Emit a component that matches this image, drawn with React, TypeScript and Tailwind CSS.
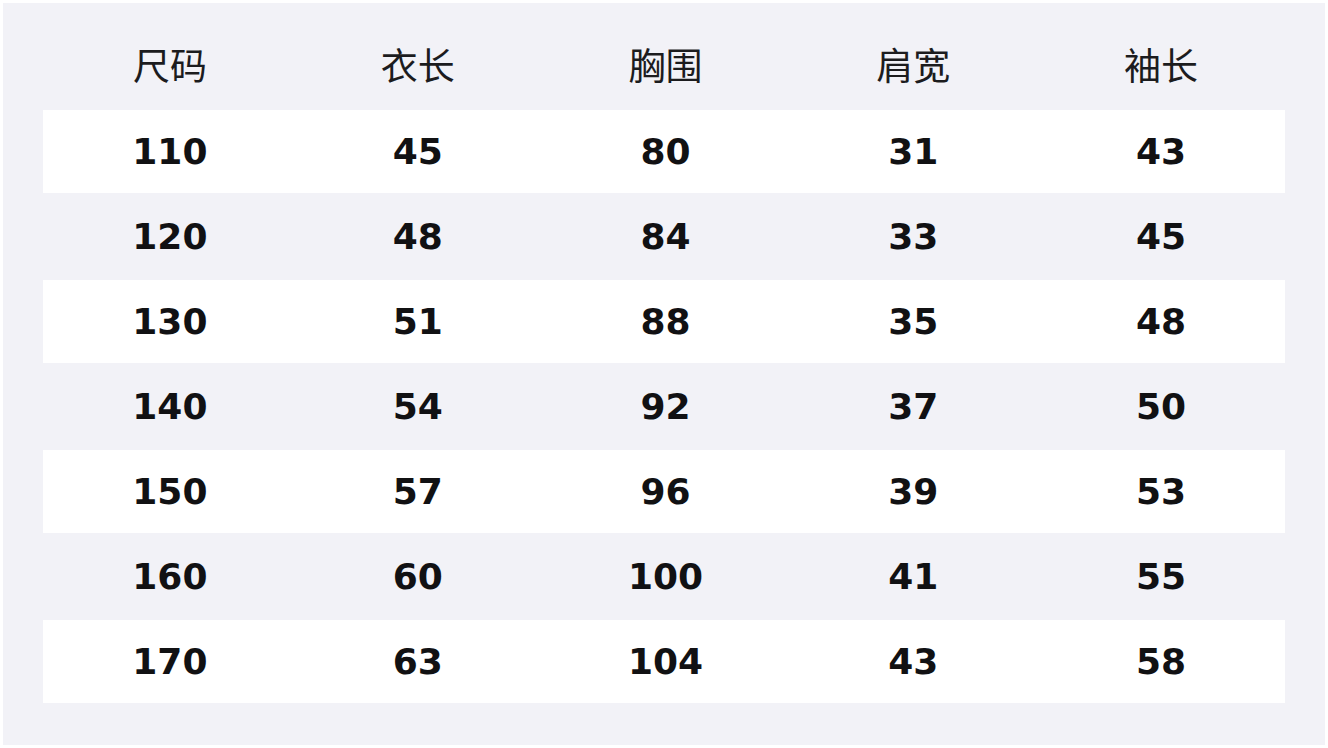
const headers = ["尺码", "衣长", "胸围", "肩宽", "袖长"];

const rows = [
  ["110", "45", "80", "31", "43"],
  ["120", "48", "84", "33", "45"],
  ["130", "51", "88", "35", "48"],
  ["140", "54", "92", "37", "50"],
  ["150", "57", "96", "39", "53"],
  ["160", "60", "100", "41", "55"],
  ["170", "63", "104", "43", "58"],
];

export default function App() {
  return (
    <div className="h-[748px] w-[1328px] bg-white p-[3px]">
      <div className="h-full w-full bg-[#f2f2f7] px-[40px]">
        {/* Header */}
        <div className="grid h-[107px] grid-cols-5 items-center pb-[2px] pl-[3px] pt-[18px]">
          {headers.map((h) => (
            <div
              key={h}
              className="text-center text-[37px] text-[#1c1c1e] [font-family:'Noto_Sans_CJK_SC','Noto_Sans',sans-serif]"
            >
              {h}
            </div>
          ))}
        </div>

        {/* Rows */}
        <div className="flex flex-col gap-[2px]">
          {rows.map((row, i) => (
            <div
              key={row[0]}
              className={`grid h-[83px] grid-cols-5 items-center pl-[3px] ${
                i % 2 === 0 ? "bg-white" : "bg-transparent"
              }`}
            >
              {row.map((cell, j) => (
                <div
                  key={j}
                  className="text-center text-[36px] font-bold text-[#111113] [font-family:'DejaVu_Sans',sans-serif]"
                >
                  {cell}
                </div>
              ))}
            </div>
          ))}
        </div>
      </div>
    </div>
  );
}
